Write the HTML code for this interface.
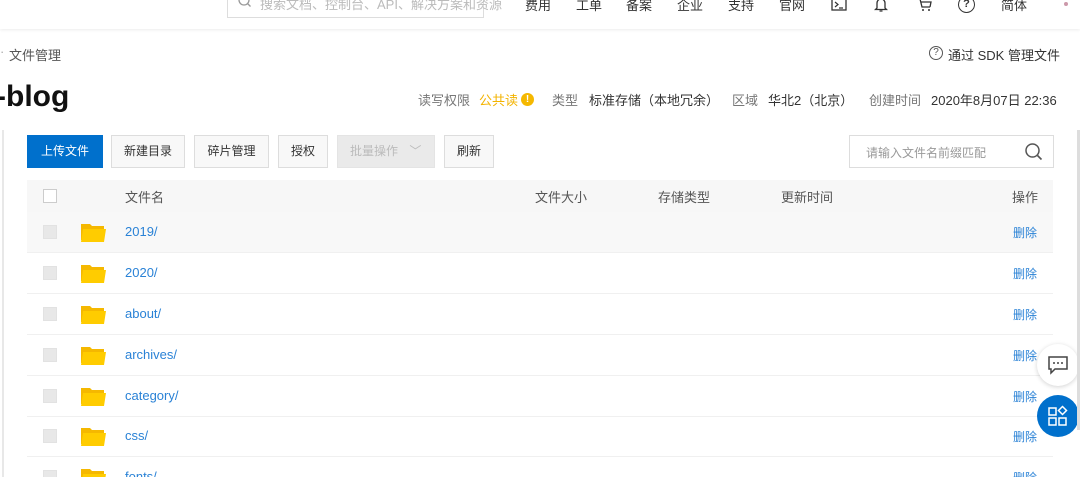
<!DOCTYPE html>
<html><head><meta charset="utf-8"><style>
*{margin:0;padding:0;box-sizing:border-box}
html,body{width:1080px;height:477px;overflow:hidden}
body{background:#fff;font-family:"Liberation Sans","Noto Sans CJK SC",sans-serif;color:#333;position:relative;font-size:12px}
.a{position:absolute;white-space:nowrap}
.top{position:absolute;left:0;top:0;width:1080px;height:29px;background:#fff;box-shadow:0 1px 3px rgba(0,0,0,.08)}
.nav{top:-5px;font-size:13px;color:#333}
.btn{position:absolute;top:135px;height:33px;border:1px solid #ddd;background:#f8f8f8;font-size:12px;line-height:31px;text-align:center;color:#333}
.row{position:absolute;left:27px;width:1026px;height:41px;border-bottom:1px solid #f0f0f0}
.cb{position:absolute;left:16px;top:13px;width:14px;height:14px;background:#e8e8e8;border:1px solid #e2e2e2}
.fd{position:absolute;left:54px;top:10px;width:25px;height:20px}
.nm{position:absolute;left:98px;top:12px;color:#2a82d6;font-size:13px}
.del{position:absolute;right:16px;top:12px;color:#2a82d6;font-size:12px}
</style></head><body>
<div class="top"></div>
<div class="a" style="left:227px;top:-6px;width:257px;height:24px;border:1px solid #ddd;"></div>
<svg class="a" style="left:237px;top:-6px" width="16" height="16"><circle cx="7" cy="6" r="5" fill="none" stroke="#999" stroke-width="1.3"/><path d="M10.5 9.5l3 3" stroke="#999" stroke-width="1.3"/></svg>
<div class="a" style="left:260px;top:-6px;font-size:13px;color:#bbb">搜索文档、控制台、API、解决方案和资源</div>
<div class="a nav" style="left:525px">费用</div>
<div class="a nav" style="left:576px">工单</div>
<div class="a nav" style="left:626px">备案</div>
<div class="a nav" style="left:677px">企业</div>
<div class="a nav" style="left:728px">支持</div>
<div class="a nav" style="left:779px">官网</div>
<svg class="a" style="left:831px;top:-3px" width="16" height="16"><rect x="1" y="1" width="14" height="12" fill="none" stroke="#333" stroke-width="1.3"/><path d="M4 5l3 2.5-3 2.5M8 11h4" stroke="#333" fill="none" stroke-width="1.2"/></svg>
<svg class="a" style="left:874px;top:-3px" width="14" height="16"><path d="M3 11V6a4 4 0 0 1 8 0v5l1.5 1.5h-11z M5.5 14h3" stroke="#333" fill="none" stroke-width="1.3"/></svg>
<svg class="a" style="left:917px;top:-3px" width="16" height="16"><path d="M1 2h2l2 8h8M4 5h10l-1 5" stroke="#333" fill="none" stroke-width="1.3"/><circle cx="6" cy="13" r="1" fill="#333"/><circle cx="12" cy="13" r="1" fill="#333"/></svg>
<div class="a" style="left:958px;top:-4px;width:17px;height:17px;border:1.5px solid #333;border-radius:50%;font-size:11px;font-weight:bold;text-align:center;line-height:14px">?</div>
<div class="a nav" style="left:1001px">简体</div>
<div class="a" style="left:1064px;top:2px;width:4px;height:4px;background:#c9a;border-radius:50%"></div>

<div class="a" style="left:0;top:44px;font-size:13px;color:#aaa">·</div>
<div class="a" style="left:9px;top:45px;font-size:13px;color:#555">文件管理</div>
<div class="a" style="left:929px;top:46px;width:14px;height:14px;border:1px solid #555;border-radius:50%;font-size:10px;text-align:center;line-height:12px;color:#555">?</div>
<div class="a" style="left:948px;top:45px;font-size:13px;color:#333">通过 SDK 管理文件</div>

<div class="a" style="left:-4px;top:80px;font-size:30px;font-weight:bold;color:#111">-blog</div>
<div class="a" style="left:418px;top:90px;font-size:13px;color:#777">读写权限</div>
<div class="a" style="left:479px;top:90px;font-size:13px;color:#f3b300">公共读</div>
<div class="a" style="left:521px;top:93px;width:13px;height:13px;border-radius:50%;background:#f5b800;color:#fff;font-size:10px;font-weight:bold;text-align:center;line-height:13px">!</div>
<div class="a" style="left:552px;top:90px;font-size:13px;color:#777">类型</div>
<div class="a" style="left:589px;top:90px;font-size:13px;color:#333">标准存储（本地冗余）</div>
<div class="a" style="left:732px;top:90px;font-size:13px;color:#777">区域</div>
<div class="a" style="left:768px;top:90px;font-size:13px;color:#333">华北2（北京）</div>
<div class="a" style="left:869px;top:90px;font-size:13px;color:#777">创建时间</div>
<div class="a" style="left:931px;top:90px;font-size:13px;color:#333">2020年8月07日 22:36</div>

<div class="a" style="left:2px;top:130px;width:2px;height:347px;background:#e8e8e8"></div>
<div class="btn" style="left:27px;width:76px;background:#0070cc;border-color:#0070cc;color:#fff">上传文件</div>
<div class="btn" style="left:111px;width:74px">新建目录</div>
<div class="btn" style="left:194px;width:75px">碎片管理</div>
<div class="btn" style="left:278px;width:50px">授权</div>
<div class="btn" style="left:337px;width:98px;background:#eaeaea;border-color:#e4e4e4;color:#bbb;text-align:left;padding-left:12px">批量操作 <span style="margin-left:8px">﹀</span></div>
<div class="btn" style="left:444px;width:50px">刷新</div>
<div class="a" style="left:849px;top:135px;width:205px;height:33px;border:1px solid #ddd"></div>
<div class="a" style="left:866px;top:144px;font-size:12px;color:#999">请输入文件名前缀匹配</div>
<svg class="a" style="left:1024px;top:142px" width="20" height="20"><circle cx="8.5" cy="8.5" r="6.5" fill="none" stroke="#555" stroke-width="1.5"/><path d="M13.5 13.5l4 4" stroke="#555" stroke-width="1.6"/></svg>

<div class="a" style="left:27px;top:180px;width:1026px;height:32px;background:#f7f7f7"></div>
<div class="a" style="left:43px;top:189px;width:14px;height:14px;background:#fff;border:1px solid #ccc"></div>
<div class="a" style="left:125px;top:187px;font-size:13px;color:#555">文件名</div>
<div class="a" style="left:535px;top:187px;font-size:13px;color:#555">文件大小</div>
<div class="a" style="left:658px;top:187px;font-size:13px;color:#555">存储类型</div>
<div class="a" style="left:781px;top:187px;font-size:13px;color:#555">更新时间</div>
<div class="a" style="left:1012px;top:187px;font-size:13px;color:#555">操作</div>

<div class="row" style="top:212px;background:#f8f8f8"><div class="cb"></div><svg class="fd" viewBox="0 0 25 20"><path d="M0 2h9l2 2h12v14H0z" fill="#f5b800"/><path d="M2 7h23l-2 13H0z" fill="#ffcc00"/></svg><div class="nm">2019/</div><div class="del">删除</div></div>
<div class="row" style="top:253px"><div class="cb"></div><svg class="fd" viewBox="0 0 25 20"><path d="M0 2h9l2 2h12v14H0z" fill="#f5b800"/><path d="M2 7h23l-2 13H0z" fill="#ffcc00"/></svg><div class="nm">2020/</div><div class="del">删除</div></div>
<div class="row" style="top:294px"><div class="cb"></div><svg class="fd" viewBox="0 0 25 20"><path d="M0 2h9l2 2h12v14H0z" fill="#f5b800"/><path d="M2 7h23l-2 13H0z" fill="#ffcc00"/></svg><div class="nm">about/</div><div class="del">删除</div></div>
<div class="row" style="top:335px"><div class="cb"></div><svg class="fd" viewBox="0 0 25 20"><path d="M0 2h9l2 2h12v14H0z" fill="#f5b800"/><path d="M2 7h23l-2 13H0z" fill="#ffcc00"/></svg><div class="nm">archives/</div><div class="del">删除</div></div>
<div class="row" style="top:376px"><div class="cb"></div><svg class="fd" viewBox="0 0 25 20"><path d="M0 2h9l2 2h12v14H0z" fill="#f5b800"/><path d="M2 7h23l-2 13H0z" fill="#ffcc00"/></svg><div class="nm">category/</div><div class="del">删除</div></div>
<div class="row" style="top:416px"><div class="cb"></div><svg class="fd" viewBox="0 0 25 20"><path d="M0 2h9l2 2h12v14H0z" fill="#f5b800"/><path d="M2 7h23l-2 13H0z" fill="#ffcc00"/></svg><div class="nm">css/</div><div class="del">删除</div></div>
<div class="row" style="top:457px"><div class="cb"></div><svg class="fd" viewBox="0 0 25 20"><path d="M0 2h9l2 2h12v14H0z" fill="#f5b800"/><path d="M2 7h23l-2 13H0z" fill="#ffcc00"/></svg><div class="nm">fonts/</div><div class="del">删除</div></div>

<div class="a" style="left:1037px;top:344px;width:42px;height:42px;border-radius:50%;background:#fff;box-shadow:0 1px 5px rgba(0,0,0,.18)"></div>
<svg class="a" style="left:1047px;top:354px" width="22" height="22"><path d="M2 3h18v12H8l-4 4v-4H2z" fill="none" stroke="#444" stroke-width="1.5"/><circle cx="7" cy="9" r="1" fill="#444"/><circle cx="11" cy="9" r="1" fill="#444"/><circle cx="15" cy="9" r="1" fill="#444"/></svg>
<div class="a" style="left:1037px;top:395px;width:42px;height:42px;border-radius:50%;background:#0070cc"></div>
<svg class="a" style="left:1047px;top:405px" width="22" height="22"><rect x="2" y="3" width="7" height="7" fill="none" stroke="#fff" stroke-width="1.5"/><rect x="2" y="13" width="7" height="7" fill="none" stroke="#fff" stroke-width="1.5"/><rect x="12" y="13" width="7" height="7" fill="none" stroke="#fff" stroke-width="1.5"/><path d="M15.5 1.5l4 4-4 4-4-4z" fill="none" stroke="#fff" stroke-width="1.5"/></svg>
<div class="a" style="left:1077px;top:130px;width:3px;height:300px;background:#ddd"></div>
</body></html>
